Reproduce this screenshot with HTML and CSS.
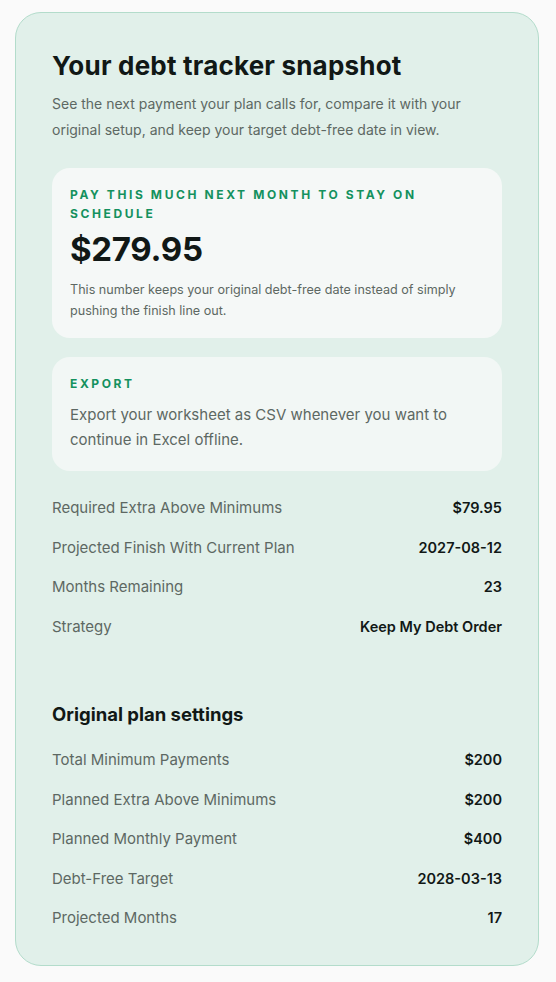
FILE: index.html
```html
<!DOCTYPE html>
<html>
    <head>
        <title>Debt tracker snapshot</title>
        <link rel="stylesheet" href="styles.css">
    </head>

<body>
    <div class="kart">
        <h1>Your debt tracker snapshot</h1>
        <p class="aciklama">See the next payment your plan calls for, compare it with your original setup, and keep your target debt-free date in view.</p>

        <div class="kutu">
            <div class="etiket">Pay this much next month to stay on schedule</div>
            <div class="tutar">$279.95</div>
            <p class="not">This number keeps your original debt-free date instead of simply pushing the finish line out.</p>
        </div>

        <div class="kutu kutuExport">
            <div class="etiket">Export</div>
            <p class="metin">Export your worksheet as CSV whenever you want to continue in Excel offline.</p>
        </div>

        <div class="liste">
            <div class="satir"><span>Required Extra Above Minimums</span><b>$79.95</b></div>
            <div class="satir"><span>Projected Finish With Current Plan</span><b>2027-08-12</b></div>
            <div class="satir"><span>Months Remaining</span><b>23</b></div>
            <div class="satir"><span>Strategy</span><b>Keep My Debt Order</b></div>
        </div>

        <h2>Original plan settings</h2>
        <div class="liste">
            <div class="satir"><span>Total Minimum Payments</span><b>$200</b></div>
            <div class="satir"><span>Planned Extra Above Minimums</span><b>$200</b></div>
            <div class="satir"><span>Planned Monthly Payment</span><b>$400</b></div>
            <div class="satir"><span>Debt-Free Target</span><b>2028-03-13</b></div>
            <div class="satir"><span>Projected Months</span><b>17</b></div>
        </div>
    </div>
</body>
</html>
```

FILE: styles.css
```css
body{
    margin: 0;
    padding: 12px 16px 16px 15px;
    background: #fafafa;
    font-family: Inter, "Noto Sans", sans-serif;
    color: #111816;
}
.kart{
    width: 450px;
    padding: 34px 36px 27px 36px;
    background: #e1f0ea;
    border: 1px solid #b3dccb;
    border-radius: 26px;
}
.kart h1{
    margin: 0;
    font-size: 26px;
    font-weight: 700;
    line-height: 38px;
    letter-spacing: 0.2px;
}
.aciklama{
    margin: 6px 0 0 0;
    font-size: 14px;
    line-height: 26px;
    color: #5d6863;
}
.kutu{
    margin-top: 25px;
    padding: 17px 18px 17px 18px;
    background: #f5f8f7;
    border-radius: 18px;
}
.kutuExport{
    margin-top: 19px;
    padding-top: 17px;
    padding-bottom: 19px;
    background: #f2f7f5;
}
.etiket{
    font-size: 12px;
    font-weight: 700;
    letter-spacing: 2.6px;
    line-height: 19px;
    text-transform: uppercase;
    color: #14915e;
}
.tutar{
    margin-top: 4px;
    font-size: 33px;
    font-weight: 700;
    line-height: 44px;
    letter-spacing: -0.3px;
}
.not{
    margin: 8px 0 0 0;
    font-size: 12.6px;
    line-height: 21px;
    color: #5d6863;
}
.metin{
    margin: 9px 0 0 0;
    font-size: 15px;
    line-height: 25px;
    color: #5d6863;
}
.liste{
    margin-top: 17px;
}
.satir{
    display: flex;
    justify-content: space-between;
    align-items: center;
    height: 39.5px;
    font-size: 15px;
}
.satir span{
    color: #5d6863;
}
.satir b{
    font-weight: 600;
    font-size: 14.5px;
}
.kart h2{
    margin: 54px 0 0 0;
    font-size: 18.5px;
    font-weight: 700;
    line-height: 28px;
}
.kart h2 + .liste{
    margin-top: 12px;
}
```
